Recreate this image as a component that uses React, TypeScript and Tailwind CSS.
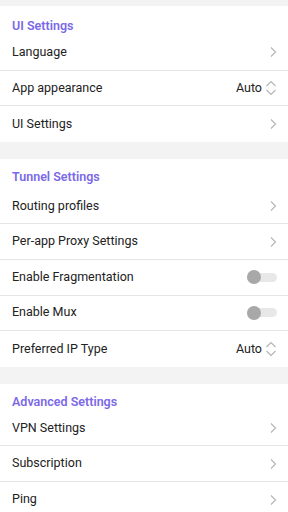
import React from "react";

type Row =
  | { label: string; kind: "link" }
  | { label: string; kind: "select"; value: string }
  | { label: string; kind: "toggle" };

const sections: { title: string; head: string; rows: Row[] }[] = [
  {
    title: "UI Settings",
    head: "h-[29px] pt-[12px]",
    rows: [
      { label: "Language", kind: "link" },
      { label: "App appearance", kind: "select", value: "Auto" },
      { label: "UI Settings", kind: "link" },
    ],
  },
  {
    title: "Tunnel Settings",
    head: "h-[30px] pt-[10px]",
    rows: [
      { label: "Routing profiles", kind: "link" },
      { label: "Per-app Proxy Settings", kind: "link" },
      { label: "Enable Fragmentation", kind: "toggle" },
      { label: "Enable Mux", kind: "toggle" },
      { label: "Preferred IP Type", kind: "select", value: "Auto" },
    ],
  },
  {
    title: "Advanced Settings",
    head: "h-[27px] pt-[10px]",
    rows: [
      { label: "VPN Settings", kind: "link" },
      { label: "Subscription", kind: "link" },
      { label: "Ping", kind: "link" },
    ],
  },
];

function Chevron() {
  return (
    <svg width="8" height="12" viewBox="0 0 8 12" className="text-[#b4b4b4]">
      <path d="M2 1.5 L6.5 6 L2 10.5" fill="none" stroke="currentColor" strokeWidth="1.1" />
    </svg>
  );
}

function UpDown() {
  return (
    <svg width="12" height="16" viewBox="0 0 12 16" className="text-[#b4b4b4]">
      <path d="M1.5 6 L6 1.5 L10.5 6 M1.5 10 L6 14.5 L10.5 10" fill="none" stroke="currentColor" strokeWidth="1.1" />
    </svg>
  );
}

function Toggle() {
  return (
    <div className="relative w-[30px] h-[14px] flex items-center">
      <div className="w-full h-[9px] rounded-full bg-[#e8e8e8]" />
      <div className="absolute left-0 top-0 w-[14px] h-[14px] rounded-full bg-[#a8a8a8]" />
    </div>
  );
}

export default function App() {
  return (
    <div className="w-[288px] h-[512px] overflow-hidden bg-[#f3f3f3] pt-[6px] font-['Roboto',sans-serif]">
      <div className="flex flex-col gap-[17px]">
        {sections.map((s) => (
          <div key={s.title} className="bg-white">
            <div className={`px-3 text-[12.5px] leading-[16px] font-semibold text-[#7b68e8] ${s.head}`}>
              {s.title}
            </div>
            {s.rows.map((r, j) => (
              <div
                key={r.label}
                className={`h-[35.6px] pl-3 pr-[11px] flex items-center justify-between text-[12.5px] text-[#222222] ${
                  j < s.rows.length - 1 ? "border-b border-[#e6e6e6]" : ""
                }`}
              >
                <span>{r.label}</span>
                {r.kind === "link" && <Chevron />}
                {r.kind === "select" && (
                  <div className="flex items-center gap-[3px]">
                    <span>{r.value}</span>
                    <UpDown />
                  </div>
                )}
                {r.kind === "toggle" && <Toggle />}
              </div>
            ))}
          </div>
        ))}
      </div>
    </div>
  );
}
